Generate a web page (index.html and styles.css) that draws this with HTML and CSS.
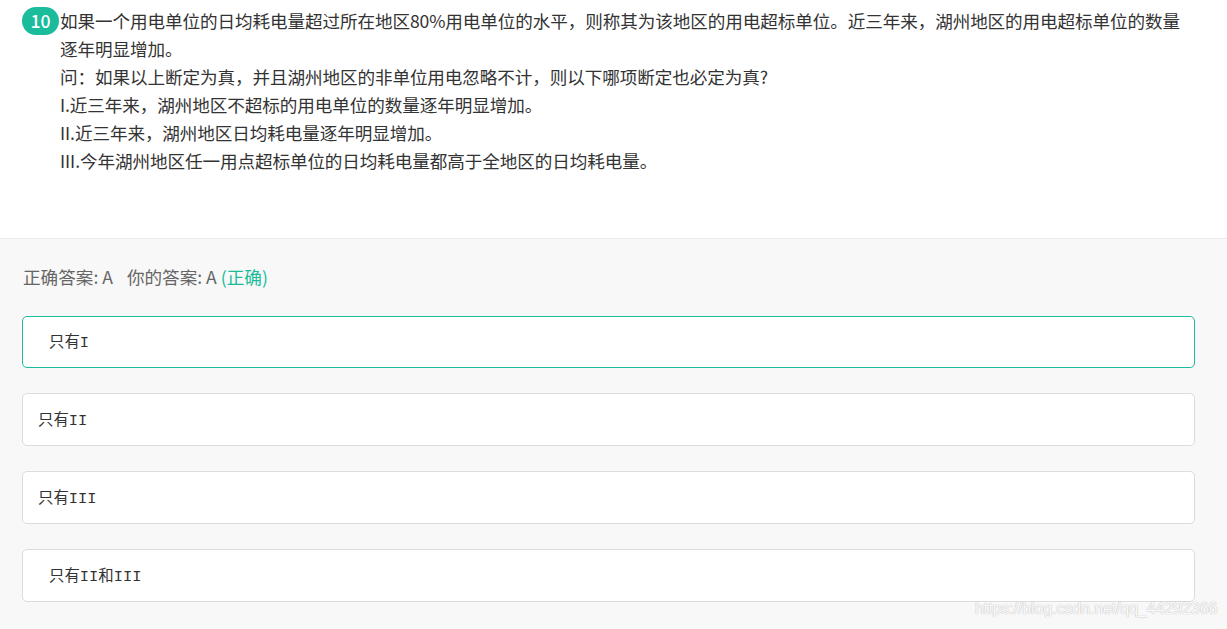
FILE: index.html
```html
<!DOCTYPE html>
<html lang="zh-CN">
<head>
<meta charset="utf-8">
<title>题目 10</title>
<link rel="stylesheet" href="styles.css">
</head>
<body>
<section class="question">
  <span class="num">10</span>
  <div class="stem">
    <p class="line">如果一个用电单位的日均耗电量超过所在地区80%用电单位的水平，则称其为该地区的用电超标单位。近三年来，湖州地区的用电超标单位的数量逐年明显增加。</p>
    <p class="line">问：如果以上断定为真，并且湖州地区的非单位用电忽略不计，则以下哪项断定也必定为真?</p>
    <p class="line">I.近三年来，湖州地区不超标的用电单位的数量逐年明显增加。</p>
    <p class="line">II.近三年来，湖州地区日均耗电量逐年明显增加。</p>
    <p class="line">III.今年湖州地区任一用点超标单位的日均耗电量都高于全地区的日均耗电量。</p>
  </div>
</section>
<section class="answers">
  <p class="result">正确答案: A<span class="gap"></span>你的答案: A <span class="ok">(正确)</span></p>
  <ul class="options">
    <li class="option option-right option-indent">只有<span class="mono">I</span></li>
    <li class="option">只有<span class="mono">II</span></li>
    <li class="option">只有<span class="mono">III</span></li>
    <li class="option option-indent">只有<span class="mono">II</span>和<span class="mono">III</span></li>
  </ul>
</section>
<div class="watermark">https://blog.csdn.net/qq_44292366</div>
</body>
</html>
```

FILE: styles.css
```css
html, body {
  margin: 0;
  padding: 0;
}
body {
  width: 1227px;
  height: 629px;
  overflow: hidden;
  position: relative;
  background: #f8f8f8;
  font-family: "Noto Sans CJK SC", "Noto Sans", sans-serif;
  color: #333;
}
.question {
  background: #fff;
  height: 231px;
  padding: 7px 32px 0 22px;
  border-bottom: 1px solid #ebebeb;
  display: flex;
  align-items: flex-start;
}
.num {
  flex: none;
  width: 37px;
  height: 28px;
  border-radius: 14px;
  background: #1abc9c;
  color: #fff;
  font-size: 17.6px;
  font-weight: 500;
  line-height: 27px;
  text-align: center;
  margin-right: 1px;
}
.stem {
  flex: 1;
  font-size: 17.6px;
  letter-spacing: -0.1px;
  line-height: 28px;
  color: #333;
}
.line {
  margin: 0;
}
.answers {
  padding: 26px 32px 0 22px;
}
.result {
  margin: 0 0 0 1px;
  font-size: 17.6px;
  line-height: 24px;
  color: #666;
}
.gap {
  display: inline-block;
  width: 14px;
}
.ok {
  color: #1abc9c;
}
.options {
  list-style: none;
  margin: 27px 0 0;
  padding: 0;
  display: flex;
  flex-direction: column;
  gap: 25px;
}
.option {
  box-sizing: border-box;
  height: 53px;
  background: #fff;
  border: 1px solid #dcdcdc;
  border-radius: 5px;
  padding-left: 15px;
  font-size: 15.4px;
  line-height: 48px;
  color: #333;
}
.option-right {
  border-color: #1abc9c;
  height: 52px;
  line-height: 47px;
}
.option-indent {
  padding-left: 26px;
}
.mono {
  font-family: "Liberation Mono", "DejaVu Sans Mono", monospace;
  font-size: 15.4px;
}
.watermark {
  position: absolute;
  left: 975px;
  top: 599px;
  font-family: "Liberation Sans", Arial, sans-serif;
  font-size: 16px;
  line-height: 20px;
  letter-spacing: -0.1px;
  color: rgba(255, 255, 255, 0.95);
  text-shadow: 0 0 1px #b8b8b8, 0 0 1px #c8c8c8;
}
```
